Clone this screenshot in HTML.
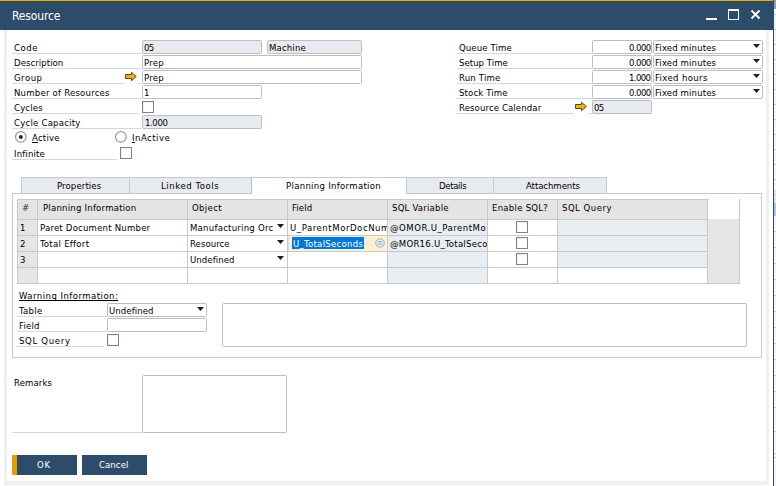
<!DOCTYPE html>
<html>
<head>
<meta charset="utf-8">
<title>Resource</title>
<style>
html,body{margin:0;padding:0;}
body{width:776px;height:486px;overflow:hidden;background:#fff;position:relative;
 font-family:"DejaVu Sans Condensed","Liberation Sans",sans-serif;font-size:9.5px;color:#000;line-height:13px;}
div,span{box-sizing:border-box;}
.a{position:absolute;}
u{text-decoration-skip-ink:none;text-underline-offset:1px;}
.t{position:absolute;text-decoration-skip-ink:none;text-underline-offset:1px;white-space:nowrap;height:13px;line-height:13px;-webkit-text-stroke:0.02px;}
.lbl{position:absolute;height:14px;border-bottom:1px solid #d3d9df;white-space:nowrap;padding-left:2px;line-height:13px;padding-top:1px;}
.f{position:absolute;height:14px;border:1px solid #bdbdbd;border-radius:1.5px;background:#fff;white-space:nowrap;padding-left:1px;line-height:13px;}
.f.d{background:#e7ebef;}
.f.r{text-align:right;padding-right:1px;padding-left:0;}
.cb{position:absolute;width:12px;height:12px;border:1px solid #7d838a;background:#fff;box-shadow:inset 1px 1px 0 #edeff1;}
.rad{position:absolute;width:12px;height:12px;border:1px solid #8e8e8e;border-radius:50%;background:#fff;}
.tri{position:absolute;width:7px;height:4px;background:#1e1e1e;clip-path:polygon(0 0,100% 0,50% 100%);}
.tab{position:absolute;top:177px;height:16px;background:#e7ebef;border:1px solid #c6c9cc;border-bottom:none;text-align:center;line-height:15px;white-space:nowrap;}
.gh{position:absolute;top:199px;height:21px;background:#e4e4e4;border:1px solid #c8c8c8;border-left:none;line-height:16px;padding-left:4px;white-space:nowrap;overflow:hidden;}
.gc{position:absolute;height:17px;border-right:1px solid #c8c8c8;border-bottom:1px solid #c8c8c8;border-top:1px solid #c8c8c8;margin-top:-1px;line-height:15px;padding-left:2px;white-space:nowrap;overflow:hidden;background:#fff;}
.gc.b{background:#e8edf1;}
.gc.n{background:#e6e6e6;}
.btn{position:absolute;top:455px;height:20px;width:65px;background:#2d4b6b;color:#fff;text-align:center;line-height:19px;}
</style>
</head>
<body>
<!-- window chrome -->
<div class="a" style="left:0;top:0;width:774px;height:30px;background:#2d4b6b;border-top:1px solid #f0ab00;"></div>
<div class="a" style="left:706px;top:18px;width:11px;height:2px;background:#fff;"></div>
<div class="a" style="left:728px;top:9px;width:11px;height:11px;border:1.5px solid #fff;border-top-width:2px;"></div>
<svg class="a" style="left:750px;top:9px;" width="11" height="11" viewBox="0 0 11 11"><path d="M1.5 1.5 L9.5 9.5 M9.5 1.5 L1.5 9.5" stroke="#fff" stroke-width="1.9" fill="none"/></svg>
<!-- inner frame -->
<div class="a" style="left:4px;top:30px;width:3px;height:455px;background:#efefef;"></div>
<div class="a" style="left:766px;top:30px;width:3px;height:455px;background:#efefef;"></div>
<div class="a" style="left:4px;top:481px;width:765px;height:4px;background:#efefef;"></div>
<div class="a" style="left:773px;top:0;width:1px;height:486px;background:#2d4b6b;"></div>
<div class="a" style="left:774px;top:0;width:2px;height:9px;background:#9aa0a8;"></div>
<div class="a" style="left:774px;top:9px;width:2px;height:477px;background:#f3f5f8;"></div>
<div class="a" style="left:774px;top:9px;width:2px;height:5px;background:#fff;"></div>
<div class="a" style="left:774px;top:190px;width:2px;height:13px;background:#e0e4e9;"></div>
<div class="a" style="left:774px;top:203px;width:2px;height:13px;background:#a9c6ec;"></div>
<div class="a" style="left:774px;top:14px;width:2px;height:1px;background:#c9ced4;"></div>
<div class="a" style="left:774px;top:29px;width:2px;height:1px;background:#c9ced4;"></div>
<div class="a" style="left:774px;top:44px;width:2px;height:1px;background:#c9ced4;"></div>
<div class="a" style="left:774px;top:59px;width:2px;height:1px;background:#c9ced4;"></div>
<div class="a" style="left:774px;top:74px;width:2px;height:1px;background:#c9ced4;"></div>
<div class="a" style="left:774px;top:89px;width:2px;height:1px;background:#c9ced4;"></div>
<div class="a" style="left:774px;top:104px;width:2px;height:1px;background:#c9ced4;"></div>
<div class="a" style="left:774px;top:119px;width:2px;height:1px;background:#c9ced4;"></div>
<div class="a" style="left:774px;top:134px;width:2px;height:1px;background:#c9ced4;"></div>
<div class="a" style="left:774px;top:149px;width:2px;height:1px;background:#c9ced4;"></div>
<div class="a" style="left:774px;top:164px;width:2px;height:1px;background:#c9ced4;"></div>
<div class="a" style="left:774px;top:179px;width:2px;height:1px;background:#c9ced4;"></div>
<div class="a" style="left:774px;top:194px;width:2px;height:1px;background:#c9ced4;"></div>
<div class="a" style="left:774px;top:231px;width:2px;height:1px;background:#c9ced4;"></div>
<div class="a" style="left:774px;top:247px;width:2px;height:1px;background:#c9ced4;"></div>
<div class="a" style="left:774px;top:263px;width:2px;height:1px;background:#c9ced4;"></div>
<div class="a" style="left:774px;top:279px;width:2px;height:1px;background:#c9ced4;"></div>
<div class="a" style="left:774px;top:295px;width:2px;height:1px;background:#c9ced4;"></div>
<div class="a" style="left:774px;top:311px;width:2px;height:1px;background:#c9ced4;"></div>
<div class="a" style="left:774px;top:327px;width:2px;height:1px;background:#c9ced4;"></div>
<div class="a" style="left:774px;top:343px;width:2px;height:1px;background:#c9ced4;"></div>
<div class="a" style="left:774px;top:359px;width:2px;height:1px;background:#c9ced4;"></div>
<div class="a" style="left:774px;top:375px;width:2px;height:1px;background:#c9ced4;"></div>
<div class="a" style="left:774px;top:391px;width:2px;height:1px;background:#c9ced4;"></div>
<div class="a" style="left:774px;top:407px;width:2px;height:1px;background:#c9ced4;"></div>
<div class="a" style="left:774px;top:431px;width:2px;height:1px;background:#c9ced4;"></div>
<div class="a" style="left:774px;top:453px;width:2px;height:1px;background:#c9ced4;"></div>
<div class="a" style="left:774px;top:457px;width:2px;height:1px;background:#c9ced4;"></div>

<!-- left column -->
<div class="lbl" style="left:12px;top:40px;width:130px;"></div>
<div class="lbl" style="left:12px;top:55px;width:130px;"></div>
<div class="lbl" style="left:12px;top:70px;width:113px;"></div><div class="lbl" style="left:138px;top:70px;width:4px;padding:0;"></div>
<div class="lbl" style="left:12px;top:85px;width:130px;"></div>
<div class="lbl" style="left:12px;top:100px;width:127px;"></div>
<div class="lbl" style="left:12px;top:115px;width:130px;"></div>
<div class="lbl" style="left:12px;top:146px;width:105px;"></div>

<div class="f d" style="left:142px;top:40px;width:120px;"></div>
<div class="f d" style="left:267px;top:40px;width:95px;"></div>
<div class="f" style="left:142px;top:55px;width:220px;"></div>
<div class="f" style="left:142px;top:70px;width:220px;"></div>
<div class="f" style="left:142px;top:85px;width:120px;"></div>
<div class="cb" style="left:142px;top:101px;"></div>
<div class="f d" style="left:142px;top:115px;width:120px;"></div>

<svg class="a" style="left:124px;top:71px;" width="14" height="11" viewBox="0 0 14 11"><path d="M1.5 3.5 H7.5 V1.3 L12.3 5.5 L7.5 9.7 V7.5 H1.5 Z" fill="#f5b000" stroke="#5e4522" stroke-width="1" stroke-linejoin="miter"/></svg>

<svg class="a" style="left:14px;top:130px;" width="14" height="14" viewBox="0 0 14 14"><circle cx="6.8" cy="6.9" r="5.3" fill="#fff" stroke="#9b9b9b" stroke-width="1.3"/><circle cx="6.8" cy="7" r="2" fill="#25253a"/></svg>
<svg class="a" style="left:114px;top:130px;" width="14" height="14" viewBox="0 0 14 14"><circle cx="6.8" cy="6.9" r="5.3" fill="#fff" stroke="#9b9b9b" stroke-width="1.3"/></svg>
<div class="cb" style="left:120px;top:147px;"></div>

<!-- right column -->
<div class="lbl" style="left:457px;top:40px;width:135px;"></div>
<div class="lbl" style="left:457px;top:55px;width:135px;"></div>
<div class="lbl" style="left:457px;top:70px;width:135px;"></div>
<div class="lbl" style="left:457px;top:85px;width:135px;"></div>
<div class="lbl" style="left:457px;top:100px;width:117px;"></div><div class="lbl" style="left:588px;top:100px;width:4px;padding:0;"></div>
<svg class="a" style="left:574px;top:101px;" width="14" height="11" viewBox="0 0 14 11"><path d="M1.5 3.5 H7.5 V1.3 L12.3 5.5 L7.5 9.7 V7.5 H1.5 Z" fill="#f5b000" stroke="#5e4522" stroke-width="1" stroke-linejoin="miter"/></svg>

<div class="f r" style="left:592px;top:40px;width:60px;"></div>
<div class="f r" style="left:592px;top:55px;width:60px;"></div>
<div class="f r" style="left:592px;top:70px;width:60px;"></div>
<div class="f r" style="left:592px;top:85px;width:60px;"></div>
<div class="f d" style="left:592px;top:100px;width:60px;"></div>

<div class="f" style="left:653px;top:40px;width:110px;"></div><div class="tri" style="left:753px;top:44px;"></div>
<div class="f" style="left:653px;top:55px;width:110px;"></div><div class="tri" style="left:753px;top:59px;"></div>
<div class="f" style="left:653px;top:70px;width:110px;"></div><div class="tri" style="left:753px;top:74px;"></div>
<div class="f" style="left:653px;top:85px;width:110px;"></div><div class="tri" style="left:753px;top:89px;"></div>

<!-- tabs -->
<div class="a" style="left:12px;top:193px;width:750px;height:165px;border:1px solid #c6c9cc;background:#fff;"></div>
<div class="tab" style="left:21px;width:109px;"></div>
<div class="tab" style="left:129px;width:123px;"></div>
<div class="tab" style="left:406px;width:88px;"></div>
<div class="tab" style="left:493px;width:114px;"></div>
<div class="tab" style="left:251px;width:156px;background:#fff;height:17px;border-left-color:#b9bcbf;"></div>

<!-- grid -->
<div class="a" style="left:17px;top:199px;width:723px;height:85px;border:1px solid #c8c8c8;border-top:none;background:#fff;"></div>
<div class="a" style="left:17px;top:199px;width:692px;height:1px;background:#c8c8c8;"></div>
<div class="a" style="left:708px;top:219px;width:31px;height:64px;background:#e6e6e6;"></div>
<div class="gh" style="left:18px;width:20px;"></div>
<div class="gh" style="left:38px;width:150px;"></div>
<div class="gh" style="left:188px;width:100px;"></div>
<div class="gh" style="left:288px;width:100px;"></div>
<div class="gh" style="left:388px;width:100px;"></div>
<div class="gh" style="left:488px;width:70px;"></div>
<div class="gh" style="left:558px;width:150px;"></div>

<!-- row 1 -->
<div class="gc n" style="left:18px;top:220px;width:20px;"></div>
<div class="gc" style="left:38px;top:220px;width:150px;"></div>
<div class="gc" style="left:188px;top:220px;width:100px;"></div>
<div class="gc" style="left:288px;top:220px;width:100px;letter-spacing:0.3px;"></div>
<div class="gc b" style="left:388px;top:220px;width:100px;letter-spacing:0.38px;"></div>
<div class="gc" style="left:488px;top:220px;width:70px;"></div>
<div class="gc b" style="left:558px;top:220px;width:150px;"></div>
<!-- row 2 -->
<div class="gc n" style="left:18px;top:236px;width:20px;"></div>
<div class="gc" style="left:38px;top:236px;width:150px;"></div>
<div class="gc" style="left:188px;top:236px;width:100px;"></div>
<div class="gc" style="left:288px;top:236px;width:100px;background:#fdf0d2;"></div>
<div class="gc b" style="left:388px;top:236px;width:100px;"></div>
<div class="gc" style="left:488px;top:236px;width:70px;"></div>
<div class="gc b" style="left:558px;top:236px;width:150px;"></div>
<!-- row 3 -->
<div class="gc n" style="left:18px;top:252px;width:20px;"></div>
<div class="gc" style="left:38px;top:252px;width:150px;"></div>
<div class="gc" style="left:188px;top:252px;width:100px;"></div>
<div class="gc" style="left:288px;top:252px;width:100px;"></div>
<div class="gc b" style="left:388px;top:252px;width:100px;"></div>
<div class="gc" style="left:488px;top:252px;width:70px;"></div>
<div class="gc b" style="left:558px;top:252px;width:150px;"></div>
<!-- row 4 -->
<div class="gc n" style="left:18px;top:268px;width:20px;"></div>
<div class="gc" style="left:38px;top:268px;width:150px;"></div>
<div class="gc" style="left:188px;top:268px;width:100px;"></div>
<div class="gc" style="left:288px;top:268px;width:100px;"></div>
<div class="gc b" style="left:388px;top:268px;width:100px;"></div>
<div class="gc" style="left:488px;top:268px;width:70px;"></div>
<div class="gc" style="left:558px;top:268px;width:150px;"></div>

<div class="a" style="left:288px;top:236px;width:1px;height:15px;background:#d5e3f2;"></div>
<div class="tri" style="left:277px;top:224px;"></div>
<div class="tri" style="left:277px;top:240px;"></div>
<div class="tri" style="left:277px;top:256px;"></div>
<div class="a" style="left:292px;top:237px;width:72px;height:12px;background:#0078d7;"></div>
<svg class="a" style="left:375px;top:238px;" width="10" height="10" viewBox="0 0 10 10"><circle cx="5" cy="5" r="4.3" fill="#e8ecf2" stroke="#aab3c0" stroke-width="1"/><path d="M2.5 3.5 H7.5 M2.5 5 H7.5 M2.5 6.5 H7.5" stroke="#aab3c0" stroke-width="0.8"/></svg>
<div class="cb" style="left:516px;top:221px;"></div>
<div class="cb" style="left:516px;top:237px;"></div>
<div class="cb" style="left:516px;top:253px;"></div>

<!-- warning info -->
<div class="lbl" style="left:17px;top:303px;width:90px;"></div>
<div class="lbl" style="left:17px;top:318px;width:90px;"></div>
<div class="lbl" style="left:17px;top:333px;width:87px;"></div>
<div class="f" style="left:107px;top:303px;width:100px;"></div><div class="tri" style="left:197px;top:307px;"></div>
<div class="f" style="left:107px;top:318px;width:100px;"></div>
<div class="cb" style="left:107px;top:334px;"></div>
<div class="f" style="left:222px;top:303px;width:525px;height:44px;"></div>

<!-- remarks -->
<div class="lbl" style="left:12px;top:376px;width:131px;height:57px;"></div>
<div class="f" style="left:142px;top:375px;width:145px;height:58px;"></div>

<!-- buttons -->
<div class="btn" style="left:12px;letter-spacing:0.8px;"></div><div class="a" style="left:12px;top:455px;width:5px;height:20px;background:#e39e00;"></div>
<div class="btn" style="left:82px;"></div>
<!-- text layer -->
<div class="t" style="left:12px;top:10px;letter-spacing:-0.14px;color:#fff;font-size:12px;">Resource</div>
<div class="t" style="left:14px;top:41px;letter-spacing:0.53px;">Code</div>
<div class="t" style="left:14px;top:56px;letter-spacing:0.06px;">Description</div>
<div class="t" style="left:14px;top:71px;letter-spacing:0.50px;">Group</div>
<div class="t" style="left:14px;top:86px;letter-spacing:0.22px;">Number of Resources</div>
<div class="t" style="left:14px;top:101px;letter-spacing:0.16px;">Cycles</div>
<div class="t" style="left:14px;top:116px;letter-spacing:0.23px;">Cycle Capacity</div>
<div class="t" style="left:32px;top:131px;letter-spacing:0.24px;"><u>A</u>ctive</div>
<div class="t" style="left:132px;top:131px;letter-spacing:0.49px;"><u>I</u>nActive</div>
<div class="t" style="left:14px;top:147px;letter-spacing:0.14px;">Infinite</div>
<div class="t" style="left:144px;top:41px;letter-spacing:-0.70px;">05</div>
<div class="t" style="left:269px;top:41px;letter-spacing:0.16px;">Machine</div>
<div class="t" style="left:144px;top:56px;letter-spacing:0.27px;">Prep</div>
<div class="t" style="left:144px;top:71px;letter-spacing:0.27px;">Prep</div>
<div class="t" style="left:144px;top:86px;">1</div>
<div class="t" style="left:145px;top:116px;letter-spacing:-0.40px;">1.000</div>
<div class="t" style="left:459px;top:41px;letter-spacing:0.11px;">Queue Time</div>
<div class="t" style="left:459px;top:56px;letter-spacing:0.04px;">Setup Time</div>
<div class="t" style="left:459px;top:71px;letter-spacing:0.20px;">Run Time</div>
<div class="t" style="left:459px;top:86px;letter-spacing:0.15px;">Stock Time</div>
<div class="t" style="left:459px;top:101px;letter-spacing:0.12px;">Resource Calendar</div>
<div class="t" style="left:629px;top:41px;letter-spacing:-0.55px;">0.000</div>
<div class="t" style="left:629px;top:56px;letter-spacing:-0.55px;">0.000</div>
<div class="t" style="left:629px;top:71px;letter-spacing:-0.60px;">1.000</div>
<div class="t" style="left:629px;top:86px;letter-spacing:-0.55px;">0.000</div>
<div class="t" style="left:594px;top:101px;letter-spacing:-0.70px;">05</div>
<div class="t" style="left:655px;top:41px;letter-spacing:0.14px;">Fixed minutes</div>
<div class="t" style="left:655px;top:56px;letter-spacing:0.14px;">Fixed minutes</div>
<div class="t" style="left:655px;top:71px;letter-spacing:0.36px;">Fixed hours</div>
<div class="t" style="left:655px;top:86px;letter-spacing:0.14px;">Fixed minutes</div>
<div class="t" style="left:57px;top:179px;letter-spacing:0.11px;">Properties</div>
<div class="t" style="left:161px;top:179px;letter-spacing:0.56px;">Linked Tools</div>
<div class="t" style="left:286px;top:179px;letter-spacing:0.30px;">Planning Information</div>
<div class="t" style="left:439px;top:179px;letter-spacing:-0.34px;">Details</div>
<div class="t" style="left:526px;top:179px;letter-spacing:-0.06px;">Attachments</div>
<div class="t" style="left:22px;top:201px;color:#333;">#</div>
<div class="t" style="left:43px;top:201px;letter-spacing:0.22px;">Planning Information</div>
<div class="t" style="left:192px;top:201px;letter-spacing:0.36px;">Object</div>
<div class="t" style="left:292px;top:201px;letter-spacing:0.10px;">Field</div>
<div class="t" style="left:392px;top:201px;letter-spacing:0.22px;">SQL Variable</div>
<div class="t" style="left:492px;top:201px;letter-spacing:0.26px;">Enable SQL?</div>
<div class="t" style="left:562px;top:201px;letter-spacing:0.48px;">SQL Query</div>
<div class="t" style="left:20px;top:221px;">1</div>
<div class="t" style="left:20px;top:237px;">2</div>
<div class="t" style="left:20px;top:253px;">3</div>
<div class="t" style="left:40px;top:221px;letter-spacing:0.21px;">Paret Document Number</div>
<div class="t" style="left:40px;top:237px;letter-spacing:0.27px;">Total Effort</div>
<div class="t" style="left:190px;top:221px;letter-spacing:0.24px;">Manufacturing Orc</div>
<div class="t" style="left:190px;top:237px;letter-spacing:0.06px;">Resource</div>
<div class="t" style="left:190px;top:253px;letter-spacing:0.08px;">Undefined</div>
<div class="t" style="left:293px;top:237px;letter-spacing:0.28px;color:#fff;">U_TotalSeconds</div>
<div class="t" style="left:19px;top:289px;letter-spacing:0.46px;text-decoration:underline;">Warning Information:</div>
<div class="t" style="left:19px;top:304px;letter-spacing:0.35px;">Table</div>
<div class="t" style="left:19px;top:319px;letter-spacing:0.20px;">Field</div>
<div class="t" style="left:19px;top:334px;letter-spacing:0.68px;">SQL Query</div>
<div class="t" style="left:109px;top:304px;letter-spacing:0.07px;">Undefined</div>
<div class="t" style="left:14px;top:376px;letter-spacing:0.13px;">Remarks</div>
<div class="t" style="left:37px;top:458px;letter-spacing:0.80px;color:#fff;">OK</div>
<div class="t" style="left:99px;top:458px;letter-spacing:0.08px;color:#fff;">Cancel</div>
<div class="a" style="left:288px;top:219px;width:99px;height:15px;overflow:hidden;"><div class="t" style="left:2px;top:2px;letter-spacing:0.55px;">U_ParentMorDocNum</div></div>
<div class="a" style="left:388px;top:219px;width:98px;height:15px;overflow:hidden;"><div class="t" style="left:2px;top:2px;letter-spacing:0.50px;">@OMOR.U_ParentMorDocNum</div></div>
<div class="a" style="left:388px;top:235px;width:99px;height:15px;overflow:hidden;"><div class="t" style="left:2px;top:2px;letter-spacing:0.25px;">@MOR16.U_TotalSeconds</div></div>
</body>
</html>
